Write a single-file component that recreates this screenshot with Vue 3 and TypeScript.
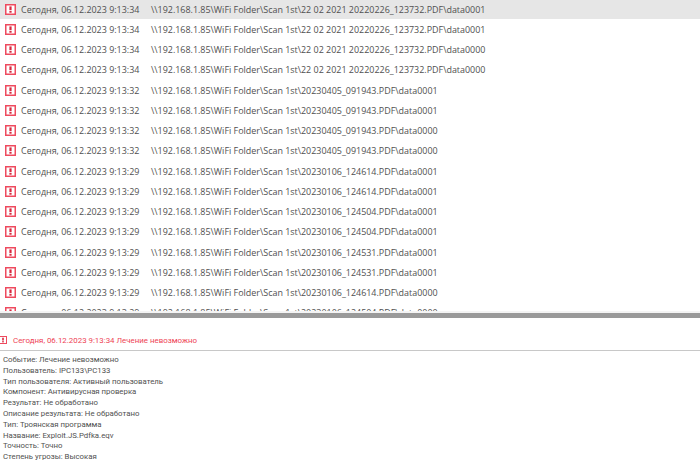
<script setup lang="ts">
const base = '\\\\192.168.1.85\\WiFi Folder\\Scan 1st\\'
const a = '22 02 2021 20220226_123732.PDF\\'
const build = (file: string, data: string): string => base + file + '.PDF\\' + data
const rows: { time: string; path: string }[] = [
  { time: '9:13:34', path: base + a + 'data0001' },
  { time: '9:13:34', path: base + a + 'data0001' },
  { time: '9:13:34', path: base + a + 'data0000' },
  { time: '9:13:34', path: base + a + 'data0000' },
  { time: '9:13:32', path: build('20230405_091943', 'data0001') },
  { time: '9:13:32', path: build('20230405_091943', 'data0001') },
  { time: '9:13:32', path: build('20230405_091943', 'data0000') },
  { time: '9:13:32', path: build('20230405_091943', 'data0000') },
  { time: '9:13:29', path: build('20230106_124614', 'data0001') },
  { time: '9:13:29', path: build('20230106_124614', 'data0001') },
  { time: '9:13:29', path: build('20230106_124504', 'data0001') },
  { time: '9:13:29', path: build('20230106_124504', 'data0001') },
  { time: '9:13:29', path: build('20230106_124531', 'data0001') },
  { time: '9:13:29', path: build('20230106_124531', 'data0001') },
  { time: '9:13:29', path: build('20230106_124614', 'data0000') },
  { time: '9:13:29', path: build('20230106_124504', 'data0000') },
]
const details: string[] = [
  'Событие: Лечение невозможно',
  'Пользователь: IPC133\\PC133',
  'Тип пользователя: Активный пользователь',
  'Компонент: Антивирусная проверка',
  'Результат: Не обработано',
  'Описание результата: Не обработано',
  'Тип: Троянская программа',
  'Название: Exploit.JS.Pdfka.eqv',
  'Точность: Точно',
  'Степень угрозы: Высокая',
]
</script>

<template>
  <div class="page">
    <div class="list">
      <div class="rows">
        <div v-for="(r, i) in rows" :key="i" class="row" :class="{ selected: i === 0 }">
          <svg class="icon" viewBox="0 0 11 11" width="11" height="11">
            <rect x="0.75" y="0.75" width="9.5" height="9.5" fill="#fff" stroke="#ee4a5e" stroke-width="1.5" />
            <rect x="4.4" y="2.4" width="2.2" height="3.8" fill="#d9283f" />
            <rect x="4.4" y="7" width="2.2" height="1.7" fill="#d9283f" />
          </svg>
          <span class="time">Сегодня, 06.12.2023 {{ r.time }}</span>
          <span class="path">{{ r.path }}</span>
        </div>
      </div>
    </div>
    <div class="splitter"></div>
    <div class="head">
      <svg class="head-icon" viewBox="0 0 8 8" width="8" height="8">
        <rect x="0.5" y="0.5" width="7" height="7" fill="#fff" stroke="#ee4a5e" stroke-width="1" />
        <rect x="3.2" y="1.7" width="1.6" height="2.8" fill="#d9283f" />
        <rect x="3.2" y="5.1" width="1.6" height="1.3" fill="#d9283f" />
      </svg>
      <span class="head-text">Сегодня, 06.12.2023 9:13:34 Лечение невозможно</span>
    </div>
    <div class="details">
      <div v-for="d in details" :key="d" class="line">{{ d }}</div>
    </div>
  </div>
</template>

<style>
html, body { margin: 0; background: #fff; }
</style>

<style scoped>
.page {
  width: 700px;
  height: 466px;
  overflow: hidden;
  display: flex;
  flex-direction: column;
  font-family: "Open Sans", "Noto Sans", sans-serif;
  color: #505050;
  background: #fff;
}
.list {
  height: 311px;
  overflow: hidden;
  flex: none;
}
.rows { margin-top: -1px; }
.row {
  height: 20.25px;
  display: flex;
  align-items: center;
  font-size: 8.95px;
  white-space: nowrap;
  padding-left: 5px;
  box-sizing: border-box;
}
.selected { background: #e6e6e6; }
.icon { flex: none; }
.time { margin-left: 5px; width: 130px; flex: none; }
.splitter {
  height: 5px;
  flex: none;
  background: #9a9a9a;
  border-top: 2px solid #f4f4f4;
  box-sizing: content-box;
}
.head {
  height: 33px;
  flex: none;
  display: flex;
  align-items: center;
  box-sizing: border-box;
  border-bottom: 1px solid #c8c8c8;
  padding-top: 12px;
  font-family: Roboto, "Open Sans", sans-serif;
  font-size: 7.9px;
  color: #ee3f54;
}
.head-icon { flex: none; margin-left: -1px; }
.head-text { margin-left: 6px; }
.details {
  padding: 4px 0 0 3px;
  font-family: Roboto, "Open Sans", sans-serif;
  font-size: 7.8px;
  line-height: 10.8px;
}
.line { white-space: nowrap; }
</style>
